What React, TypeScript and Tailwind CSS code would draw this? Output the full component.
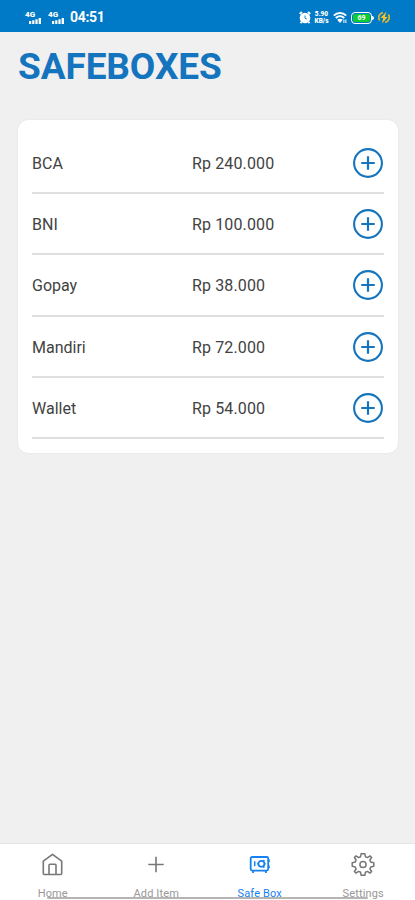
import React from 'react';

interface Safebox {
    name: string;
    balance: string;
}

const safeboxes: Safebox[] = [
    { name: 'BCA', balance: 'Rp 240.000' },
    { name: 'BNI', balance: 'Rp 100.000' },
    { name: 'Gopay', balance: 'Rp 38.000' },
    { name: 'Mandiri', balance: 'Rp 72.000' },
    { name: 'Wallet', balance: 'Rp 54.000' },
];

// --- Icons ---
const SignalIcon: React.FC = () => (
    <div className="relative h-[14px] w-4 text-white">
        <span className="absolute top-0 left-0 text-[8px] leading-[7px] font-black">4G</span>
        <svg className="absolute right-0 bottom-[1px]" width="12" height="6" viewBox="0 0 12 6" fill="currentColor">
            <path d="M0 3h2.2v3H0zM3.2 2.2h2.2V6H3.2zM6.4 1.2h2.2V6H6.4zM9.6 0H12v6H9.6z" />
        </svg>
    </div>
);

const AlarmIcon: React.FC = () => (
    <svg width="12" height="13" viewBox="0 0 12 13" fill="none">
        <path d="M.8 3 3 1M11.2 3 9 1M2.4 11l-.9 1.2M9.6 11l.9 1.2" stroke="white" strokeWidth="2" />
        <circle cx="6" cy="7" r="5.3" fill="white" />
        <path d="M6 4.5v2.7l1.8.8" stroke="#0079c6" strokeWidth="0.9" />
    </svg>
);

const WifiIcon: React.FC = () => (
    <svg width="14" height="12" viewBox="0 0 14 12" fill="none">
        <path d="M.8 3.6C4.3.2 9.7.2 13.2 3.6M2.8 6c2.4-2.2 6-2.2 8.4 0" stroke="white" strokeWidth="2" />
        <path d="M4.2 7.7c1.6-1.3 4-1.3 5.6 0L7 11z" fill="white" />
        <path d="M10.9 7.5V11M12.9 7.5V11" stroke="white" strokeWidth="1" />
    </svg>
);

const PlusCircleIcon: React.FC = () => (
    <svg width="30" height="30" viewBox="0 0 30 30" fill="none" stroke="#1474bd">
        <circle cx="15" cy="15" r="13.9" strokeWidth="2.1" />
        <path d="M15 8.3v13.4M8.3 15h13.4" strokeWidth="2.2" />
    </svg>
);

const HomeIcon: React.FC = () => (
    <svg width="24" height="24" viewBox="0 0 24 24" fill="none" stroke="currentColor" strokeWidth="1.6" strokeLinejoin="round">
        <path d="M2.3 8.1 11.5 1.4l9.2 6.7v12.4a1 1 0 0 1-1 1H3.3a1 1 0 0 1-1-1z" />
        <path d="M8 21.5v-9.3a1 1 0 0 1 1-1h5a1 1 0 0 1 1 1v9.3" />
    </svg>
);

const AddIcon: React.FC = () => (
    <svg width="24" height="24" viewBox="0 0 24 24" fill="none" stroke="currentColor" strokeWidth="1.6">
        <path d="M12 3.8v15.4M4.3 11.5h15.4" />
    </svg>
);

const SafeIcon: React.FC = () => (
    <svg width="24" height="24" viewBox="0 0 24 24" fill="none" stroke="currentColor" strokeWidth="1.8">
        <rect x="2.7" y="4" width="17.5" height="13.6" rx="1.5" />
        <circle cx="13.4" cy="10.8" r="3" strokeWidth="1.7" />
        <path d="M6.7 8.3v5M9.2 10.8h1.2M16.5 10.8h1.2M15.4 8l1-.8M15.4 13.8l1 .8" strokeWidth="1.5" />
        <path d="M5 17.5V20M17.9 17.5V20M20.9 6.5v2.6M20.9 12.5v2.6" />
    </svg>
);

const SettingsIcon: React.FC = () => (
    <svg width="24" height="24" viewBox="0 0 24 24" fill="none" stroke="currentColor" strokeWidth="1.5" strokeLinejoin="round">
        <path d="m10.2.7-.6 3-2.1.9L5 2.9 3.4 4.5l1.7 2.5-.9 2.1-3 .6v3.6l3 .6.9 2.1-1.7 2.5L5 20.1l2.5-1.7 2.1.9.6 3h3.6l.6-3 2.1-.9 2.5 1.7 1.6-1.6-1.7-2.5.9-2.1 3-.6V9.7l-3-.6-.9-2.1 1.7-2.5L19 2.9l-2.5 1.7-2.1-.9-.6-3z" />
        <circle cx="12" cy="11.5" r="3.1" />
    </svg>
);

// --- Status Bar ---
const StatusBar: React.FC = () => (
    <header className="flex h-8 shrink-0 items-center bg-[#0079c6] pt-[3px] pl-[25px] text-white">
        <SignalIcon />
        <div className="ml-[7px]"><SignalIcon /></div>
        <span className="ml-[6px] text-[14px] font-bold tracking-[-0.3px]">04:51</span>
        <div className="ml-auto flex items-center pr-[25px]">
            <AlarmIcon />
            <div className="ml-[3px] w-[15px] text-center text-[6.5px] leading-[6.5px] font-black">
                <p>5.90</p>
                <p>KB/s</p>
            </div>
            <div className="ml-[4px]"><WifiIcon /></div>
            <div className="ml-[4px] flex items-center">
                <div className="flex h-3 w-[21px] rounded-[4px] border border-white p-px">
                    <span className="flex-1 rounded-[2px] bg-[#10cc30] text-center text-[7px] leading-2 font-bold">69</span>
                </div>
                <span className="h-1 w-0.5 rounded-r bg-white" />
            </div>
            <svg className="ml-[4px]" width="12" height="13" viewBox="0 0 12 13" fill="none">
                <path d="M1.7 9.5A5 5 0 0 1 5 1.6M10.3 3.5A5 5 0 0 1 7 11.4" stroke="#d9b72f" strokeWidth="1.7" />
                <path d="M8.5.5 2.5 7h2.8L3.8 12.5 9.6 6H6.8z" fill="#ffc51c" />
            </svg>
        </div>
    </header>
);

// --- Safebox List ---
const SafeboxRow: React.FC<{ box: Safebox }> = ({ box }) => (
    <li className="flex h-[61.2px] items-center border-b-2 border-[#dfdfdf] pt-[3px] text-[16px] text-[#424242]">
        <span className="w-40">{box.name}</span>
        <span className="flex-1 tracking-[0.13px]">{box.balance}</span>
        <button className="-mt-[2px] mr-px" aria-label={`Add to ${box.name}`}>
            <PlusCircleIcon />
        </button>
    </li>
);

// --- Bottom Tabs ---
const tabs = [
    { label: 'Home', icon: <HomeIcon />, active: false },
    { label: 'Add Item', icon: <AddIcon />, active: false },
    { label: 'Safe Box', icon: <SafeIcon />, active: true },
    { label: 'Settings', icon: <SettingsIcon />, active: false },
];

const TabBar: React.FC = () => (
    <nav className="relative grid h-[57px] shrink-0 grid-cols-4 border-t border-[#e4e4e4] bg-white pl-px">
        {tabs.map(tab => (
            <button key={tab.label} className={`flex flex-col items-center pt-[9px] ${tab.active ? 'text-[#1681f3]' : 'text-[#777777]'}`}>
                {tab.icon}
                <span className={`mt-[10px] text-[11px] leading-[13px] tracking-[0.15px] ${tab.active ? '' : 'text-[#989898]'}`}>{tab.label}</span>
            </button>
        ))}
        {/* gesture handle */}
        <span className="absolute bottom-px left-[47px] h-[2px] w-[321px] rounded-full bg-[#b5b5b5]" />
    </nav>
);

export default function App() {
    return (
        <div className="flex h-[900px] w-full flex-col overflow-hidden bg-[#f0f0f0] font-['Roboto',sans-serif]">
            <StatusBar />
            <main className="flex-1 pt-[13px] pr-[17px] pl-[18px]">
                <h1 className="text-[37px] leading-[44px] font-bold tracking-[-0.1px] text-[#1474bd]">SAFEBOXES</h1>
                <ul className="mt-[31px] rounded-[10px] bg-white px-[14px] pt-[13px] pb-[14px] shadow-[0_0_2px_rgba(0,0,0,0.08)]">
                    {safeboxes.map(box => <SafeboxRow key={box.name} box={box} />)}
                </ul>
            </main>
            <TabBar />
        </div>
    );
}
